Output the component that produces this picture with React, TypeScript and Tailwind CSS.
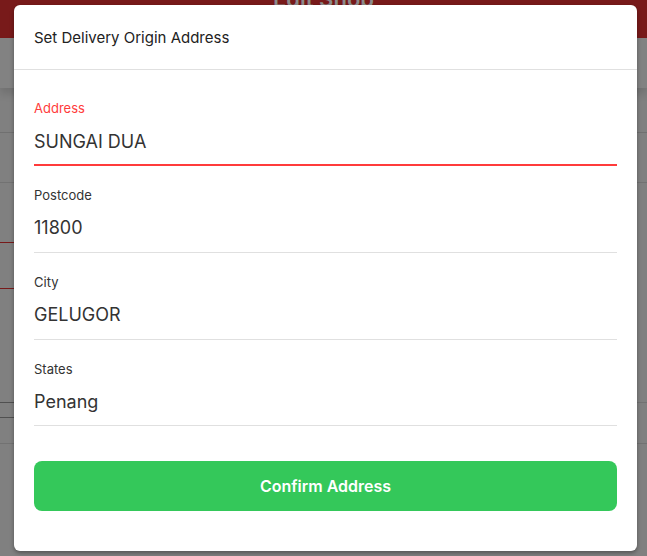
export default function App() {
  const fields = [
    { label: "Postcode", value: "11800", pb: "pb-[12px]" },
    { label: "City", value: "GELUGOR", pb: "pb-[12px]" },
    { label: "States", value: "Penang", pb: "pb-[11px]" },
  ];
  return (
    <div className="relative w-[647px] h-[556px] overflow-hidden bg-[#808080] font-['Inter',sans-serif]">
      {/* dimmed page behind */}
      <div className="flex flex-col">
        <div className="h-[38px] bg-[#781a1a] flex justify-center overflow-hidden">
          <span className="text-[22px] font-semibold text-[#8c8c8c] leading-[22px] mt-[-12px] h-[22px]">Edit Shop</span>
        </div>
        <div className="h-[50px] bg-[#828282] shadow-[0_6px_8px_rgba(0,0,0,0.12)]" />
        <div className="h-[45px] border-b border-[#707070]" />
        <div className="h-[50px] border-b border-[#727272]" />
        <div className="h-[60px] flex">
          <div className="w-1/2 border-b border-[#781a1a]" />
          <div className="w-1/2" />
        </div>
        <div className="h-[46px] flex">
          <div className="w-1/2 border-b border-[#781a1a]" />
          <div className="w-1/2" />
        </div>
        <div className="h-[113px] flex">
          <div className="w-1/2" />
          <div className="w-1/2 h-[114px] border-b border-[#727272]" />
        </div>
        <div className="h-[15px] flex">
          <div className="w-1/2 border-t border-[#505050]" />
          <div className="w-1/2" />
        </div>
        <div className="h-[26px] flex">
          <div className="w-1/2 border-t border-[#505050]" />
          <div className="w-1/2" />
        </div>
        <div className="h-[72px] border-t border-[#727272] flex">
          <div className="w-[160px] border-r border-[#6a6a6a]" />
          <div className="w-[232px] border-r border-[#6a6a6a]" />
          <div className="w-[234px] border-r border-[#6a6a6a]" />
        </div>
      </div>

      {/* modal */}
      <div className="absolute left-[14px] top-[5px] w-[623px] h-[546px] bg-white rounded-md shadow-[0_2px_4px_rgba(0,0,0,0.35)] flex flex-col">
        <div className="h-[65px] px-5 flex items-center border-b border-[#e0e0e0]">
          <span className="text-[15px] text-[#222] leading-none mt-[1px]">Set Delivery Origin Address</span>
        </div>
        <div className="px-5 flex flex-col">
          <div className="pt-[30px] pb-[10px] border-b-2 border-[#ff3b3b] flex flex-col">
            <span className="text-[13px] leading-4 text-[#ff3b3b]">Address</span>
            <span className="mt-[14px] text-[18px] leading-6 text-[#333]">SUNGAI DUA</span>
          </div>
          {fields.map((f) => (
            <div key={f.label} className={`pt-[21px] border-b border-[#e0e0e0] flex flex-col ${f.pb}`}>
              <span className="text-[13px] leading-4 text-[#333]">{f.label}</span>
              <span className="mt-[13px] text-[18px] leading-6 text-[#333]">{f.value}</span>
            </div>
          ))}
          <button className="mt-[35px] h-[50px] w-full rounded-lg bg-[#34c85a] text-white text-[16px] font-semibold">
            Confirm Address
          </button>
        </div>
      </div>
    </div>
  );
}
